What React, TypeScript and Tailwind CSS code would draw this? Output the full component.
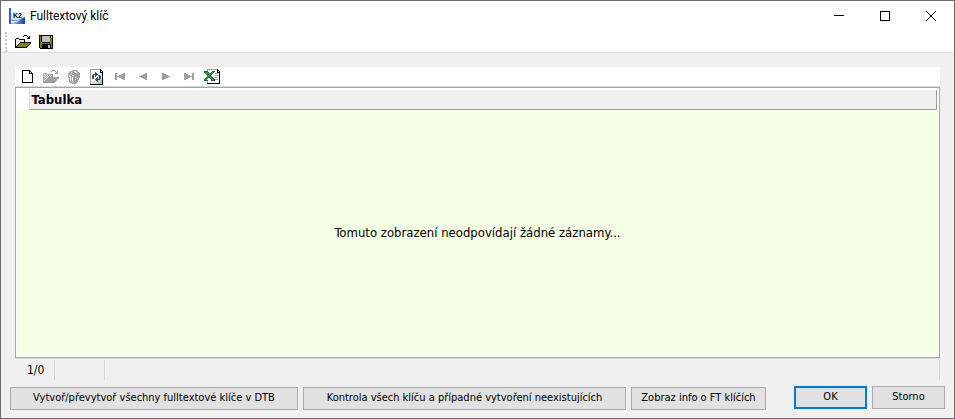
import type { ReactNode } from "react";

const inks: Record<string, string> = {
  k: "#000000",
  g: "#a0a0a0",
  o: "#808000",
  y: "#ffff33",
  w: "#ffffff",
  s: "#c0c0c0",
  l: "#d3e5d0",
  t: "#b4cdb4",
  b: "#3c4c70",
  n: "#1f6a2e",
  m: "#4fae55",
};

function Pixels({ rows }: { rows: string[] }) {
  const width = Math.max(...rows.map((r) => r.length));
  return (
    <svg width={width} height={rows.length} shapeRendering="crispEdges" aria-hidden="true">
      {rows.flatMap((row, y) =>
        [...row].map((c, x) =>
          inks[c] ? <rect key={`${x}-${y}`} x={x} y={y} width="1" height="1" fill={inks[c]} /> : null,
        ),
      )}
    </svg>
  );
}

const openRows = [
  ".........kkk....",
  "........k...k.k.",
  ".............kk.",
  ".kkk........kkk.",
  "kyyykkkkkk......",
  "kwywywywyk......",
  "kyyyyyyyyk......",
  "kwywykkkkkkkkkkk",
  "kyyykooooooooook",
  "kwykooooooooook.",
  "kykooooooooook..",
  "kkooooooooook...",
  "kkkkkkkkkkkk....",
];

const openGrayRows = [
  ".........ggg....",
  "........g...g.g.",
  ".............gg.",
  ".ggg........ggg.",
  "gwgwgggggg......",
  "ggwgwgwgwg......",
  "gwgwgwgwgg......",
  "ggwgwggggggggggg",
  "gwgwgggggggggggg",
  "ggwggggggggggg..",
  "gwgggggggggggg..",
  "ggggggggggggg...",
  "gggggggggggg....",
];

const saveRows = [
  "kkkkkkkkkkkkkk",
  "kokssssssssksk",
  "kokssssssssksk",
  "kokssssssssook",
  "kokssssssssook",
  "kokssssssssook",
  "kokssssssssook",
  "kookkkkkkkkook",
  "kooooooooooook",
  "kookkkkkkkkkok",
  "kookkkkkksskok",
  "kookkkkkksskok",
  "kookkkkkksskok",
  ".kkkkkkkkkkkkk",
];

const newRows = [
  "kkkkkkkk...",
  "k......kk..",
  "k......k.k.",
  "k......kkkk",
  "k.........k",
  "k.........k",
  "k.........k",
  "k.........k",
  "k.........k",
  "k.........k",
  "k.........k",
  "k.........k",
  "kkkkkkkkkkk",
];

const trashRows = [
  "....ggggg...",
  "..ggggwwgg..",
  ".ggwgggwwgg.",
  "ggwggwgggggg",
  "gggwgggggggg",
  "gwggwwgggggg",
  "gwwggggggggg",
  "ggwgwggwgggg",
  ".gwgwggggwg.",
  ".gwgwggwggg.",
  ".gwgwggggg..",
  ".ggwgwgggg..",
  "..ggwgggg...",
  "....gggg....",
];

const refreshRows = [
  "ggggggggggk..",
  "gwwwwwwwwwkk.",
  "gwwwwwwwwwkwk",
  "gwwwwbwwwwkkk",
  "gwwwwbbwwwwlk",
  "gwwbbbbbwwllk",
  "gwbbwbbwbbllk",
  "gwbbwbwwlbblk",
  "gwbbwwwblbblk",
  "gwbbwwbblbblk",
  "gwwwwbbbbbltk",
  "gwwwwlbbltttk",
  "gwwwlllbltttk",
  "gwllllllttssk",
  "gllllllttsssk",
  "kkkkkkkkkkkkk",
];

const excelRows = [
  "...ggggggggggk..",
  "...gwwwwwwwwwkk.",
  "nnnnwwwwnnnwwkwk",
  "nmnmnwwnmnwwwkkk",
  ".nmnmnnmnwwgggwk",
  "..nmnmnnwwwwwwwk",
  "...nmnnwwwwgggwk",
  "...nnmnnwwwwwwwk",
  "..nmnnmnnwwgggwk",
  ".nmnwwnmnnwwwwwk",
  "nmnwwwwnmnngggwk",
  "nnnnwwwnnnnwwwwk",
  "...gwwwwwwwwwwwk",
  "...gwwwwwwwwwwwk",
  "...kkkkkkkkkkkkk",
];

const prevRows = [
  "......gg",
  "....gggg",
  "..gggggg",
  "gggggggg",
  "..gggggg",
  "....gggg",
  "......gg",
];
const nextRows = prevRows.map((r) => [...r].reverse().join(""));
const firstRows = prevRows.map((r) => "gg" + r);
const lastRows = nextRows.map((r) => r + "gg");

function ToolButton({ label, children, disabled }: { label: string; children: ReactNode; disabled?: boolean }) {
  return (
    <button type="button" aria-label={label} disabled={disabled} className="flex h-5 w-[23px] items-center justify-center">
      {children}
    </button>
  );
}

function AppLogo() {
  return (
    <svg width="16" height="16" viewBox="0 0 16 16" aria-hidden="true">
      <defs>
        <linearGradient id="wave" x1="0" y1="0" x2="1" y2="0">
          <stop offset="0" stopColor="#8fc4ee" />
          <stop offset="1" stopColor="#1a3fae" />
        </linearGradient>
      </defs>
      <rect x="2" y="4" width="14" height="8" fill="#dfe9f6" />
      <rect width="2" height="16" fill="#2f5fd0" />
      <path d="M2 11 Q7 14 16 9 V16 H2Z" fill="url(#wave)" />
      <path d="M2 13 Q8 14 12 11 Q9 15 2 15Z" fill="#e4f2fc" />
      <text x="4" y="10" fontSize="7" fontWeight="bold" fontFamily="Liberation Sans, sans-serif" fill="#111">
        K2
      </text>
    </svg>
  );
}

const pushButton = "h-[23px] border border-[#adadad] bg-[#e1e1e1] text-center whitespace-nowrap";

export default function App() {
  return (
    <main className="flex min-h-screen flex-col border border-[#6b6b6b] bg-[#f0f0f0] font-['DejaVu_Sans_Condensed','Noto_Sans',sans-serif] text-xs text-black">
      <header className="flex h-[30px] items-center bg-white pl-2 font-[Roboto,sans-serif]">
        <AppLogo />
        <h1 className="ml-[5px] flex-1">Fulltextový klíč</h1>
        <button type="button" aria-label="Minimalizovat" className="flex h-7 w-[46px] items-center justify-center">
          <svg width="10" height="10" shapeRendering="crispEdges"><path d="M0 4.5H10" stroke="#000" /></svg>
        </button>
        <button type="button" aria-label="Maximalizovat" className="flex h-7 w-[46px] items-center justify-center">
          <svg width="10" height="10" shapeRendering="crispEdges"><path d="M.5 .5H9.5V9.5H.5Z" fill="none" stroke="#000" /></svg>
        </button>
        <button type="button" aria-label="Zavřít" className="flex h-7 w-[46px] items-center justify-center">
          <svg width="10" height="10"><path d="M0 0L10 10M10 0L0 10" stroke="#000" /></svg>
        </button>
      </header>
      <div className="flex h-[22px] items-center border-b border-[#dcdcdc] bg-white pl-1" role="toolbar" aria-label="Soubor">
        <span className="mr-1 h-5 border-l-2 border-dotted border-[#c4c4c4]" />
        <ToolButton label="Otevřít"><Pixels rows={openRows} /></ToolButton>
        <ToolButton label="Uložit"><Pixels rows={saveRows} /></ToolButton>
      </div>

      <section className="mx-[14px] mt-[14px] flex flex-1 flex-col">
        <div className="flex h-[19px] items-center bg-white pl-px" role="toolbar" aria-label="Záznamy">
          <ToolButton label="Nový"><Pixels rows={newRows} /></ToolButton>
          <ToolButton label="Změnit" disabled><Pixels rows={openGrayRows} /></ToolButton>
          <ToolButton label="Smazat" disabled><Pixels rows={trashRows} /></ToolButton>
          <ToolButton label="Obnovit"><Pixels rows={refreshRows} /></ToolButton>
          <ToolButton label="První" disabled><Pixels rows={firstRows} /></ToolButton>
          <ToolButton label="Předchozí" disabled><Pixels rows={prevRows} /></ToolButton>
          <ToolButton label="Další" disabled><Pixels rows={nextRows} /></ToolButton>
          <ToolButton label="Poslední" disabled><Pixels rows={lastRows} /></ToolButton>
          <ToolButton label="Export do Excelu"><Pixels rows={excelRows} /></ToolButton>
        </div>
        <div className="flex flex-1 flex-col border-t border-b border-[#d9d9d9]">
          <div className="flex flex-1 flex-col border border-[#a5a5ab] bg-white px-px pb-px">
            <table className="w-full border-collapse">
              <thead>
                <tr className="h-[22px]">
                  <td className="w-3 border-r border-[#dcdcdc]" />
                  <th className="p-0 pt-px pr-px text-left text-[13px] font-bold">
                    <div className="h-5 border-r border-b border-[#a0a0a0] bg-[#f0f0f0] pl-[2px] leading-5">Tabulka</div>
                  </th>
                </tr>
              </thead>
            </table>
            <p className="flex flex-1 items-center justify-center bg-[#f5ffe6] text-[13px]">
              Tomuto zobrazení neodpovídají žádné záznamy...
            </p>
          </div>
        </div>
        <div className="flex h-[21px] border-r border-[#d7d7d7] pt-px leading-5">
          <span className="w-10 border-r border-[#d7d7d7] pl-3">1/0</span>
          <span className="w-[50px] border-r border-[#d7d7d7]" />
        </div>
      </section>

      <footer className="flex gap-[5px] px-[9px] pt-[6px] pb-2 text-[11px]">
        <button type="button" className={`${pushButton} mt-px w-[288px]`}>Vytvoř/převytvoř všechny fulltextové klíče v DTB</button>
        <button type="button" className={`${pushButton} mt-px w-[323px]`}>Kontrola všech klíču a případné vytvoření neexistujících</button>
        <button type="button" className={`${pushButton} mt-px w-[135px]`}>Zobraz info o FT klíčích</button>
        <button type="button" className="ml-auto h-[23px] w-[73px] border-2 border-[#0078d7] bg-[#e1e1e1]">OK</button>
        <button type="button" className={`${pushButton} w-[73px]`}>Storno</button>
      </footer>
    </main>
  );
}
